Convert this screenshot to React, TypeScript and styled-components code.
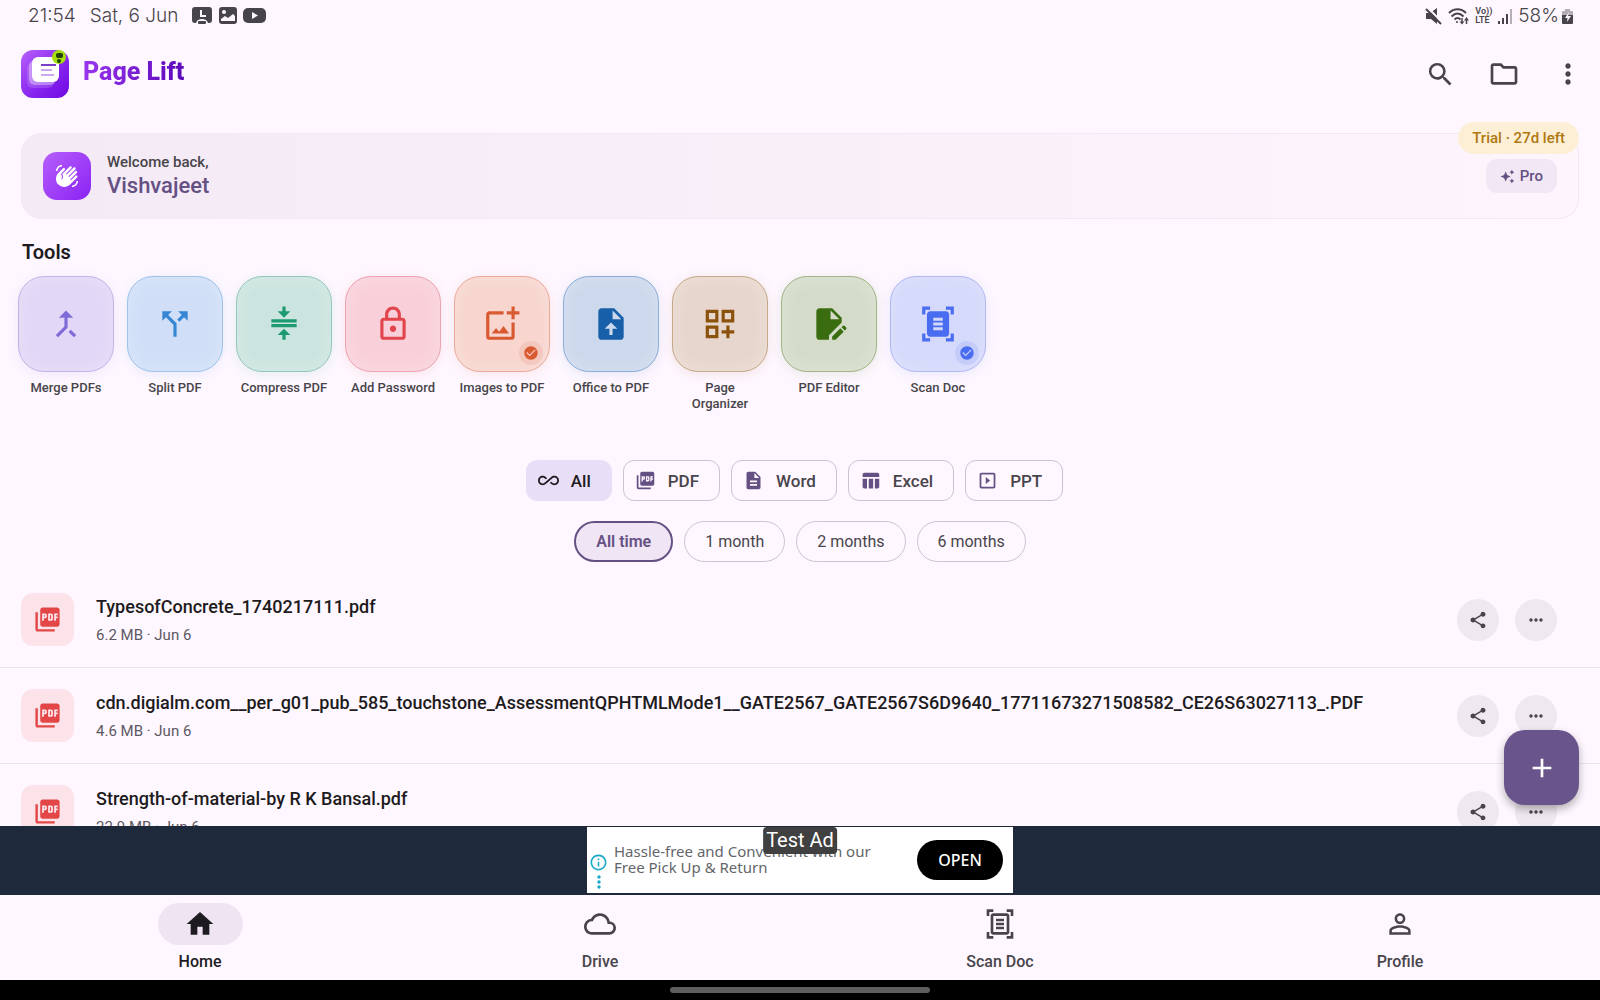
import React from "react";
import styled, { createGlobalStyle } from "styled-components";
import {
  MdAdd,
  MdAllInclusive,
  MdAutoAwesome,
  MdCallMerge,
  MdCallSplit,
  MdCheckCircle,
  MdCompress,
  MdDescription,
  MdDocumentScanner,
  MdEditDocument,
  MdHome,
  MdMoreHoriz,
  MdMoreVert,
  MdOutlineAddPhotoAlternate,
  MdOutlineCloud,
  MdOutlineDashboardCustomize,
  MdOutlineDocumentScanner,
  MdOutlineFolder,
  MdOutlineInfo,
  MdOutlineLock,
  MdOutlineSlideshow,
  MdPersonOutline,
  MdPictureAsPdf,
  MdSearch,
  MdShare,
  MdTableChart,
  MdWavingHand,
} from "react-icons/md";

type Icon = React.ComponentType<{ size?: number }>;

const GlobalStyle = createGlobalStyle`
  *, *::before, *::after { box-sizing: border-box; }
  body {
    margin: 0;
    background: #fef7ff;
    color: #1d1b20;
    font-family: Roboto, "Liberation Sans", sans-serif;
  }
  button { font: inherit; color: inherit; border: 0; background: none; padding: 0; cursor: pointer; }
  h1, h2, p, ul { margin: 0; padding: 0; }
  ul { list-style: none; }
  svg { display: block; flex: none; }
`;

const Screen = styled.div`
  display: flex;
  flex-direction: column;
  height: 100vh;
  overflow: hidden;
`;

const StatusBar = styled.div`
  display: flex;
  justify-content: space-between;
  align-items: center;
  height: 34px;
  padding: 0 27px 2px 28px;
  color: #48454a;
  font-family: Inter, Roboto, sans-serif;
  font-size: 19px;
  line-height: 24px;
  font-weight: 300;
`;

const StatusGroup = styled.div<{ $gap: number }>`
  display: flex;
  align-items: center;
  gap: ${(p) => p.$gap}px;
`;

const Volte = styled.span`
  font-family: Roboto, sans-serif;
  font-size: 9px;
  font-weight: 600;
  line-height: 9px;
`;

const AppBar = styled.header`
  display: flex;
  align-items: center;
  justify-content: space-between;
  height: 80px;
  padding: 0 16px 0 21px;
`;

const Brand = styled.div`
  display: flex;
  align-items: center;
  gap: 14px;
`;

const BrandName = styled.h1`
  font-size: 25px;
  line-height: 32px;
  font-weight: 800;
  padding-bottom: 4px;
  color: transparent;
  background: linear-gradient(100deg, #9a35f0, #5a08b8);
  background-clip: text;
  -webkit-background-clip: text;
`;

const BarActions = styled.div`
  display: flex;
  align-items: center;
  gap: 32px;
`;

const IconButton = styled.button`
  display: grid;
  place-items: center;
  width: 32px;
  height: 32px;
  color: #48454a;
`;

const Content = styled.main`
  position: relative;
  flex: 1;
  min-height: 0;
  overflow: hidden;
`;

const Welcome = styled.section`
  position: relative;
  display: flex;
  align-items: center;
  gap: 16px;
  height: 86px;
  margin: 19px 21px 0;
  padding: 0 21px;
  border: 1px solid #f0e8f3;
  border-radius: 20px;
  background: linear-gradient(90deg, #f4eaf5, #f8eff9 50%, #fdf4fc);
`;

const WaveBadge = styled.div`
  display: grid;
  place-items: center;
  width: 48px;
  height: 48px;
  border-radius: 14px;
  color: #fff;
  background: linear-gradient(135deg, #b660fb, #8a22f4);
`;

const Greeting = styled.div`
  flex: 1;
`;

const GreetingSmall = styled.p`
  font-size: 15px;
  line-height: 20px;
  font-weight: 500;
  color: #48454a;
`;

const GreetingName = styled.p`
  font-size: 22px;
  line-height: 28px;
  font-weight: 500;
  color: #655084;
`;

const ProButton = styled.button`
  display: flex;
  align-items: center;
  gap: 5px;
  height: 34px;
  padding: 0 14px;
  border-radius: 11px;
  background: #f1e7f5;
  color: #655084;
  font-size: 15px;
  font-weight: 500;
`;

const TrialBadge = styled.span`
  position: absolute;
  top: -12px;
  right: -1px;
  padding: 0 14px;
  border-radius: 16px;
  background: #fcefd6;
  color: #b0780f;
  font-size: 15px;
  line-height: 32px;
  font-weight: 500;
`;

const SectionTitle = styled.h2`
  margin: 20px 22px 0;
  font-size: 20px;
  line-height: 26px;
  font-weight: 600;
`;

const ToolRow = styled.ul`
  display: flex;
  gap: 13px;
  height: 195px;
  padding: 11px 18px 0;
`;

const ToolButton = styled.button`
  display: flex;
  flex-direction: column;
  align-items: center;
  gap: 8px;
  width: 96px;
  color: #48454a;
  font-size: 13px;
  line-height: 16px;
  font-weight: 500;
`;

const ToolTile = styled.span<{ $tint: string; $edge: string; $ink: string }>`
  position: relative;
  display: grid;
  place-items: center;
  width: 96px;
  height: 96px;
  border: 1px solid ${(p) => p.$edge};
  border-radius: 26px;
  background: ${(p) => p.$tint};
  color: ${(p) => p.$ink};
  box-shadow: 0 2px 12px ${(p) => p.$ink}1c, inset 0 0 18px #ffffff40;
`;

const TileCheck = styled.span`
  position: absolute;
  right: 6px;
  bottom: 6px;
  display: grid;
  place-items: center;
  width: 24px;
  height: 24px;
  border-radius: 50%;
  background: color-mix(in srgb, currentColor 12%, transparent);
`;

const ToolLabel = styled.span`
  max-width: 88px;
`;

const ChipRow = styled.div<{ $trail?: number }>`
  display: flex;
  justify-content: center;
  gap: 11px;
  padding-right: ${(p) => p.$trail ?? 0}px;
  margin-bottom: 20px;
`;

const TypeChip = styled.button<{ $active?: boolean }>`
  display: flex;
  align-items: center;
  gap: 12px;
  height: 41px;
  padding: 0 20px 0 11px;
  border: 1px solid ${(p) => (p.$active ? "#e9def7" : "#cac4cf")};
  border-radius: 11px;
  background: ${(p) => (p.$active ? "#e9def7" : "transparent")};
  color: ${(p) => (p.$active ? "#1d1b20" : "#48454a")};
  font-size: 17px;
  font-weight: 500;
  svg { color: ${(p) => (p.$active ? "#1d1b20" : "#655084")}; }
`;

const TimeChip = styled.button<{ $active?: boolean }>`
  height: 41px;
  padding: 0 20px;
  border: ${(p) => (p.$active ? "2px solid #655084" : "1px solid #cac4cf")};
  border-radius: 21px;
  background: ${(p) => (p.$active ? "#f0e5f4" : "transparent")};
  color: ${(p) => (p.$active ? "#655084" : "#48454a")};
  font-size: 16px;
  font-weight: ${(p) => (p.$active ? 600 : 400)};
`;

const FileList = styled.ul`
  margin-top: -10px;
`;

const FileRow = styled.li`
  display: flex;
  align-items: center;
  gap: 22px;
  height: 96px;
  padding: 0 43px 0 21px;
  border-bottom: 1px solid #ebe4ed;
`;

const FileIcon = styled.div`
  display: grid;
  place-items: center;
  width: 53px;
  height: 53px;
  border-radius: 12px;
  background: #fce3e9;
  color: #e24646;
`;

const FileText = styled.div`
  flex: 1;
  min-width: 0;
`;

const FileName = styled.p`
  margin-bottom: 4px;
  font-size: 18px;
  line-height: 26px;
  font-weight: 500;
  white-space: nowrap;
`;

const FileMeta = styled.p`
  font-size: 15px;
  line-height: 22px;
  color: #5d5962;
`;

const FileActions = styled.div`
  display: flex;
  gap: 16px;
`;

const RoundButton = styled.button`
  display: grid;
  place-items: center;
  width: 42px;
  height: 42px;
  border-radius: 50%;
  background: #efe8f0;
  color: #48454a;
`;

const Fab = styled.button`
  position: absolute;
  right: 21px;
  bottom: 21px;
  display: grid;
  place-items: center;
  width: 75px;
  height: 75px;
  border-radius: 21px;
  background: #6a548c;
  color: #fff;
  box-shadow: 0 4px 8px #0000004d;
`;

const AdStrip = styled.aside`
  display: flex;
  justify-content: center;
  height: 69px;
  padding: 1px 0 2px;
  background: #1e293b;
`;

const AdCard = styled.div`
  position: relative;
  display: flex;
  align-items: center;
  width: 426px;
  padding: 0 10px 0 3px;
  background: #fff;
  font-family: "Noto Sans", sans-serif;
`;

const AdMarks = styled.div`
  align-self: flex-end;
  display: flex;
  flex-direction: column;
  align-items: center;
  width: 17px;
  padding-bottom: 1px;
  color: #19a9c9;
`;

const AdCopy = styled.p`
  flex: 1;
  padding: 0 0 2px 7px;
  font-size: 15px;
  line-height: 16px;
  color: #63666a;
`;

const AdTag = styled.span`
  position: absolute;
  top: 0;
  left: 50%;
  transform: translateX(-50%);
  padding: 0 3px;
  border-radius: 4px;
  background: #404040;
  color: #fff;
  font-family: Roboto, sans-serif;
  font-size: 20px;
  line-height: 27px;
  white-space: nowrap;
`;

const AdOpen = styled.button`
  width: 86px;
  height: 40px;
  border-radius: 20px;
  background: #000;
  color: #fff;
  font-size: 16px;
  font-weight: 500;
`;

const NavBar = styled.nav`
  display: grid;
  grid-template-columns: repeat(4, 1fr);
  height: 85px;
`;

const NavButton = styled.button<{ $active?: boolean }>`
  display: flex;
  flex-direction: column;
  align-items: center;
  gap: 7px;
  padding-top: 8px;
  color: ${(p) => (p.$active ? "#1d1b20" : "#48454a")};
  font-size: 16px;
  line-height: 20px;
  font-weight: 500;
`;

const NavPill = styled.span<{ $active?: boolean }>`
  display: grid;
  place-items: center;
  width: 85px;
  height: 42px;
  border-radius: 21px;
  background: ${(p) => (p.$active ? "#eee4f2" : "transparent")};
`;

const GestureBar = styled.div`
  display: grid;
  place-items: center;
  height: 20px;
  background: #000;
`;

const GestureHandle = styled.div`
  width: 260px;
  height: 6px;
  border-radius: 3px;
  background: #5e5e5e;
`;

const UploadPage: Icon = ({ size = 24 }) => (
  <svg width={size} height={size} viewBox="0 0 24 24" fill="currentColor" aria-hidden="true">
    <path
      fillRule="evenodd"
      d="M14 2H6c-1.100 0-2 .9-2 2v16c0 1.100.9 2 2 2h12c1.100 0 2-.9 2-2V8l-6-6zm-1 7V3.500L18.500 9H13zm0 6v4h-2v-4H8l4-4 4 4h-3z"
    />
  </svg>
);

const tools: {
  label: string;
  icon: Icon;
  tint: string;
  edge: string;
  ink: string;
  checked?: boolean;
}[] = [
  { label: "Merge PDFs", icon: MdCallMerge, tint: "#e2d7f6", edge: "#c5b5e6", ink: "#7f6bd8" },
  { label: "Split PDF", icon: MdCallSplit, tint: "#d0dff7", edge: "#9dc3ea", ink: "#3586d4" },
  { label: "Compress PDF", icon: MdCompress, tint: "#cbe4df", edge: "#93c9bb", ink: "#1c9a72" },
  { label: "Add Password", icon: MdOutlineLock, tint: "#f9d0da", edge: "#eca4b0", ink: "#e2464c" },
  { label: "Images to PDF", icon: MdOutlineAddPhotoAlternate, tint: "#f8d5cf", edge: "#e9aa9b", ink: "#d95a30", checked: true },
  { label: "Office to PDF", icon: UploadPage, tint: "#ccd8ec", edge: "#8bafd8", ink: "#175fa8" },
  { label: "Page Organizer", icon: MdOutlineDashboardCustomize, tint: "#e7d6cd", edge: "#c6a98b", ink: "#8a520b" },
  { label: "PDF Editor", icon: MdEditDocument, tint: "#d4dcc9", edge: "#a3b586", ink: "#3a6d10" },
  { label: "Scan Doc", icon: MdDocumentScanner, tint: "#d5d9fb", edge: "#b0b9f2", ink: "#4a6cf0", checked: true },
];

const types: { label: string; icon: Icon }[] = [
  { label: "All", icon: MdAllInclusive },
  { label: "PDF", icon: MdPictureAsPdf },
  { label: "Word", icon: MdDescription },
  { label: "Excel", icon: MdTableChart },
  { label: "PPT", icon: MdOutlineSlideshow },
];

const periods = ["All time", "1 month", "2 months", "6 months"];

const files = [
  { name: "TypesofConcrete_1740217111.pdf", meta: "6.2 MB · Jun 6" },
  {
    name: "cdn.digialm.com__per_g01_pub_585_touchstone_AssessmentQPHTMLMode1__GATE2567_GATE2567S6D9640_17711673271508582_CE26S63027113_.PDF",
    meta: "4.6 MB · Jun 6",
  },
  { name: "Strength-of-material-by R K Bansal.pdf", meta: "22.9 MB · Jun 6" },
];

const tabs: { label: string; icon: Icon }[] = [
  { label: "Home", icon: MdHome },
  { label: "Drive", icon: MdOutlineCloud },
  { label: "Scan Doc", icon: MdOutlineDocumentScanner },
  { label: "Profile", icon: MdPersonOutline },
];

const NotificationIcons = () => (
  <svg width="75" height="18" viewBox="0 0 75 18" fill="#48454a" aria-hidden="true">
    <path d="M3 0h14a3 3 0 0 1 3 3v10a3 3 0 0 1-3 3h-1c-1-3-3-4-6-4s-5 1-6 4H3a3 3 0 0 1-3-3V3a3 3 0 0 1 3-3z" />
    <path d="M9 3v6h5" fill="none" stroke="#fef7ff" strokeWidth="2" />
    <rect x="6" y="14" width="8" height="3" rx="1" />
    <rect x="27" y="0" width="18" height="17" rx="3" />
    <circle cx="32" cy="5" r="2" fill="#fef7ff" />
    <path d="M29 14v-2l4-3 3 2 5-4 2 2v5z" fill="#fef7ff" />
    <rect x="51" y="1" width="23" height="15" rx="5" />
    <path d="M60 5v7l6-3.500z" fill="#fef7ff" />
  </svg>
);

const MutedIcon = () => (
  <svg width="17" height="17" viewBox="0 0 17 17" aria-hidden="true">
    <path d="M1 5h4l7-5v16l-6-5H1z" fill="#48454a" />
    <path d="M3 0l14 14" stroke="#fef7ff" strokeWidth="2" />
    <path d="M1 1l15 15" stroke="#48454a" strokeWidth="2" />
  </svg>
);

const WifiIcon = () => (
  <svg width="21" height="17" viewBox="0 0 21 17" fill="none" stroke="#48454a" strokeWidth="2" aria-hidden="true">
    <path d="M1 5c5-5 12-5 17 0M3.500 8.500c4-4 8-4 12 0M6.500 11.500c2-2 4-2 6 0" />
    <circle cx="9" cy="14" r="1" fill="#48454a" stroke="none" />
    <path d="M14 10v5M18.500 16v-5" strokeWidth="1.500" />
    <path d="M11.500 13.500h5L14 16.500zM16 12.500h5L18.500 9z" fill="#48454a" stroke="none" />
  </svg>
);

const SignalIcon = () => (
  <svg width="14" height="15" viewBox="0 0 14 15" fill="#48454a" aria-hidden="true">
    <path d="M0 12h2v3H0zM4 9h2v6H4zM8 5h2v10H8z" />
    <path d="M12 0h2v15h-2z" opacity="0.4" />
  </svg>
);

const BatteryIcon = () => (
  <svg width="11" height="15" viewBox="0 0 11 15" aria-hidden="true">
    <path d="M3 0h5v2h2a1 1 0 0 1 1 1v4H0V3a1 1 0 0 1 1-1h2z" fill="#b3aeb6" />
    <path d="M0 6h11v8a1 1 0 0 1-1 1H1a1 1 0 0 1-1-1z" fill="#48454a" />
    <path d="M7 3L3 9h2.500L5 13l4-6H6z" fill="#fef7ff" />
  </svg>
);

const Logo = () => (
  <svg width="48" height="48" viewBox="0 0 48 48" aria-hidden="true">
    <defs>
      <linearGradient id="logo-fill" x1="0" y1="0" x2="1" y2="1">
        <stop offset="0" stopColor="#b760fa" />
        <stop offset="0.6" stopColor="#8523ee" />
        <stop offset="1" stopColor="#6e08e0" />
      </linearGradient>
    </defs>
    <rect width="48" height="48" rx="12" fill="url(#logo-fill)" />
    <rect x="6" y="13" width="27" height="25" rx="6" fill="#fff" opacity="0.15" />
    <rect x="8" y="10" width="27" height="25" rx="6" fill="#fff" opacity="0.35" />
    <rect x="11" y="7" width="27" height="25" rx="6" fill="#fff" />
    <path d="M20 15h15" stroke="#7b3fc6" strokeWidth="2" />
    <path d="M20 20h11M20 25h13" stroke="#cba8ee" strokeWidth="2" />
    <circle cx="38" cy="7" r="7" fill="#a6e00c" />
    <rect x="35" y="3" width="7" height="5" rx="2" fill="#24420a" />
    <circle cx="38" cy="11" r="2" fill="#24420a" />
  </svg>
);

export default function App() {
  return (
    <Screen>
      <GlobalStyle />
      <StatusBar>
        <StatusGroup $gap={14}>
          <span>21:54</span>
          <span>Sat, 6 Jun</span>
          <NotificationIcons />
        </StatusGroup>
        <StatusGroup $gap={6}>
          <MutedIcon />
          <WifiIcon />
          <Volte>
            Vo))
            <br />
            LTE
          </Volte>
          <SignalIcon />
          <StatusGroup $gap={3}>
            <span>58%</span>
            <BatteryIcon />
          </StatusGroup>
        </StatusGroup>
      </StatusBar>

      <AppBar>
        <Brand>
          <Logo />
          <BrandName>Page Lift</BrandName>
        </Brand>
        <BarActions>
          <IconButton aria-label="Search"><MdSearch size={31} /></IconButton>
          <IconButton aria-label="Folders"><MdOutlineFolder size={32} /></IconButton>
          <IconButton aria-label="More"><MdMoreVert size={32} /></IconButton>
        </BarActions>
      </AppBar>

      <Content>
        <Welcome>
          <WaveBadge><MdWavingHand size={24} /></WaveBadge>
          <Greeting>
            <GreetingSmall>Welcome back,</GreetingSmall>
            <GreetingName>Vishvajeet</GreetingName>
          </Greeting>
          <ProButton><MdAutoAwesome size={15} />Pro</ProButton>
          <TrialBadge>Trial · 27d left</TrialBadge>
        </Welcome>

        <SectionTitle>Tools</SectionTitle>
        <ToolRow>
          {tools.map(({ label, icon: ToolIcon, tint, edge, ink, checked }) => (
            <li key={label}>
              <ToolButton>
                <ToolTile $tint={tint} $edge={edge} $ink={ink}>
                  <ToolIcon size={38} />
                  {checked && <TileCheck><MdCheckCircle size={16} /></TileCheck>}
                </ToolTile>
                <ToolLabel>{label}</ToolLabel>
              </ToolButton>
            </li>
          ))}
        </ToolRow>

        <ChipRow $trail={11}>
          {types.map(({ label, icon: TypeIcon }, i) => (
            <TypeChip key={label} $active={i === 0}>
              <TypeIcon size={21} />
              {label}
            </TypeChip>
          ))}
        </ChipRow>
        <ChipRow>
          {periods.map((label, i) => (
            <TimeChip key={label} $active={i === 0}>{label}</TimeChip>
          ))}
        </ChipRow>

        <FileList>
          {files.map((file) => (
            <FileRow key={file.name}>
              <FileIcon><MdPictureAsPdf size={29} /></FileIcon>
              <FileText>
                <FileName>{file.name}</FileName>
                <FileMeta>{file.meta}</FileMeta>
              </FileText>
              <FileActions>
                <RoundButton aria-label="Share"><MdShare size={20} /></RoundButton>
                <RoundButton aria-label="File options"><MdMoreHoriz size={20} /></RoundButton>
              </FileActions>
            </FileRow>
          ))}
        </FileList>
        <Fab aria-label="Add file"><MdAdd size={32} /></Fab>
      </Content>

      <AdStrip>
        <AdCard>
          <AdMarks>
            <MdOutlineInfo size={19} />
            <MdMoreVert size={20} />
          </AdMarks>
          <AdCopy>
            Hassle-free and Convenient with our
            <br />
            Free Pick Up &amp; Return
          </AdCopy>
          <AdOpen>OPEN</AdOpen>
          <AdTag>Test Ad</AdTag>
        </AdCard>
      </AdStrip>

      <NavBar>
        {tabs.map(({ label, icon: TabIcon }, i) => (
          <NavButton key={label} $active={i === 0}>
            <NavPill $active={i === 0}><TabIcon size={32} /></NavPill>
            {label}
          </NavButton>
        ))}
      </NavBar>
      <GestureBar><GestureHandle /></GestureBar>
    </Screen>
  );
}
